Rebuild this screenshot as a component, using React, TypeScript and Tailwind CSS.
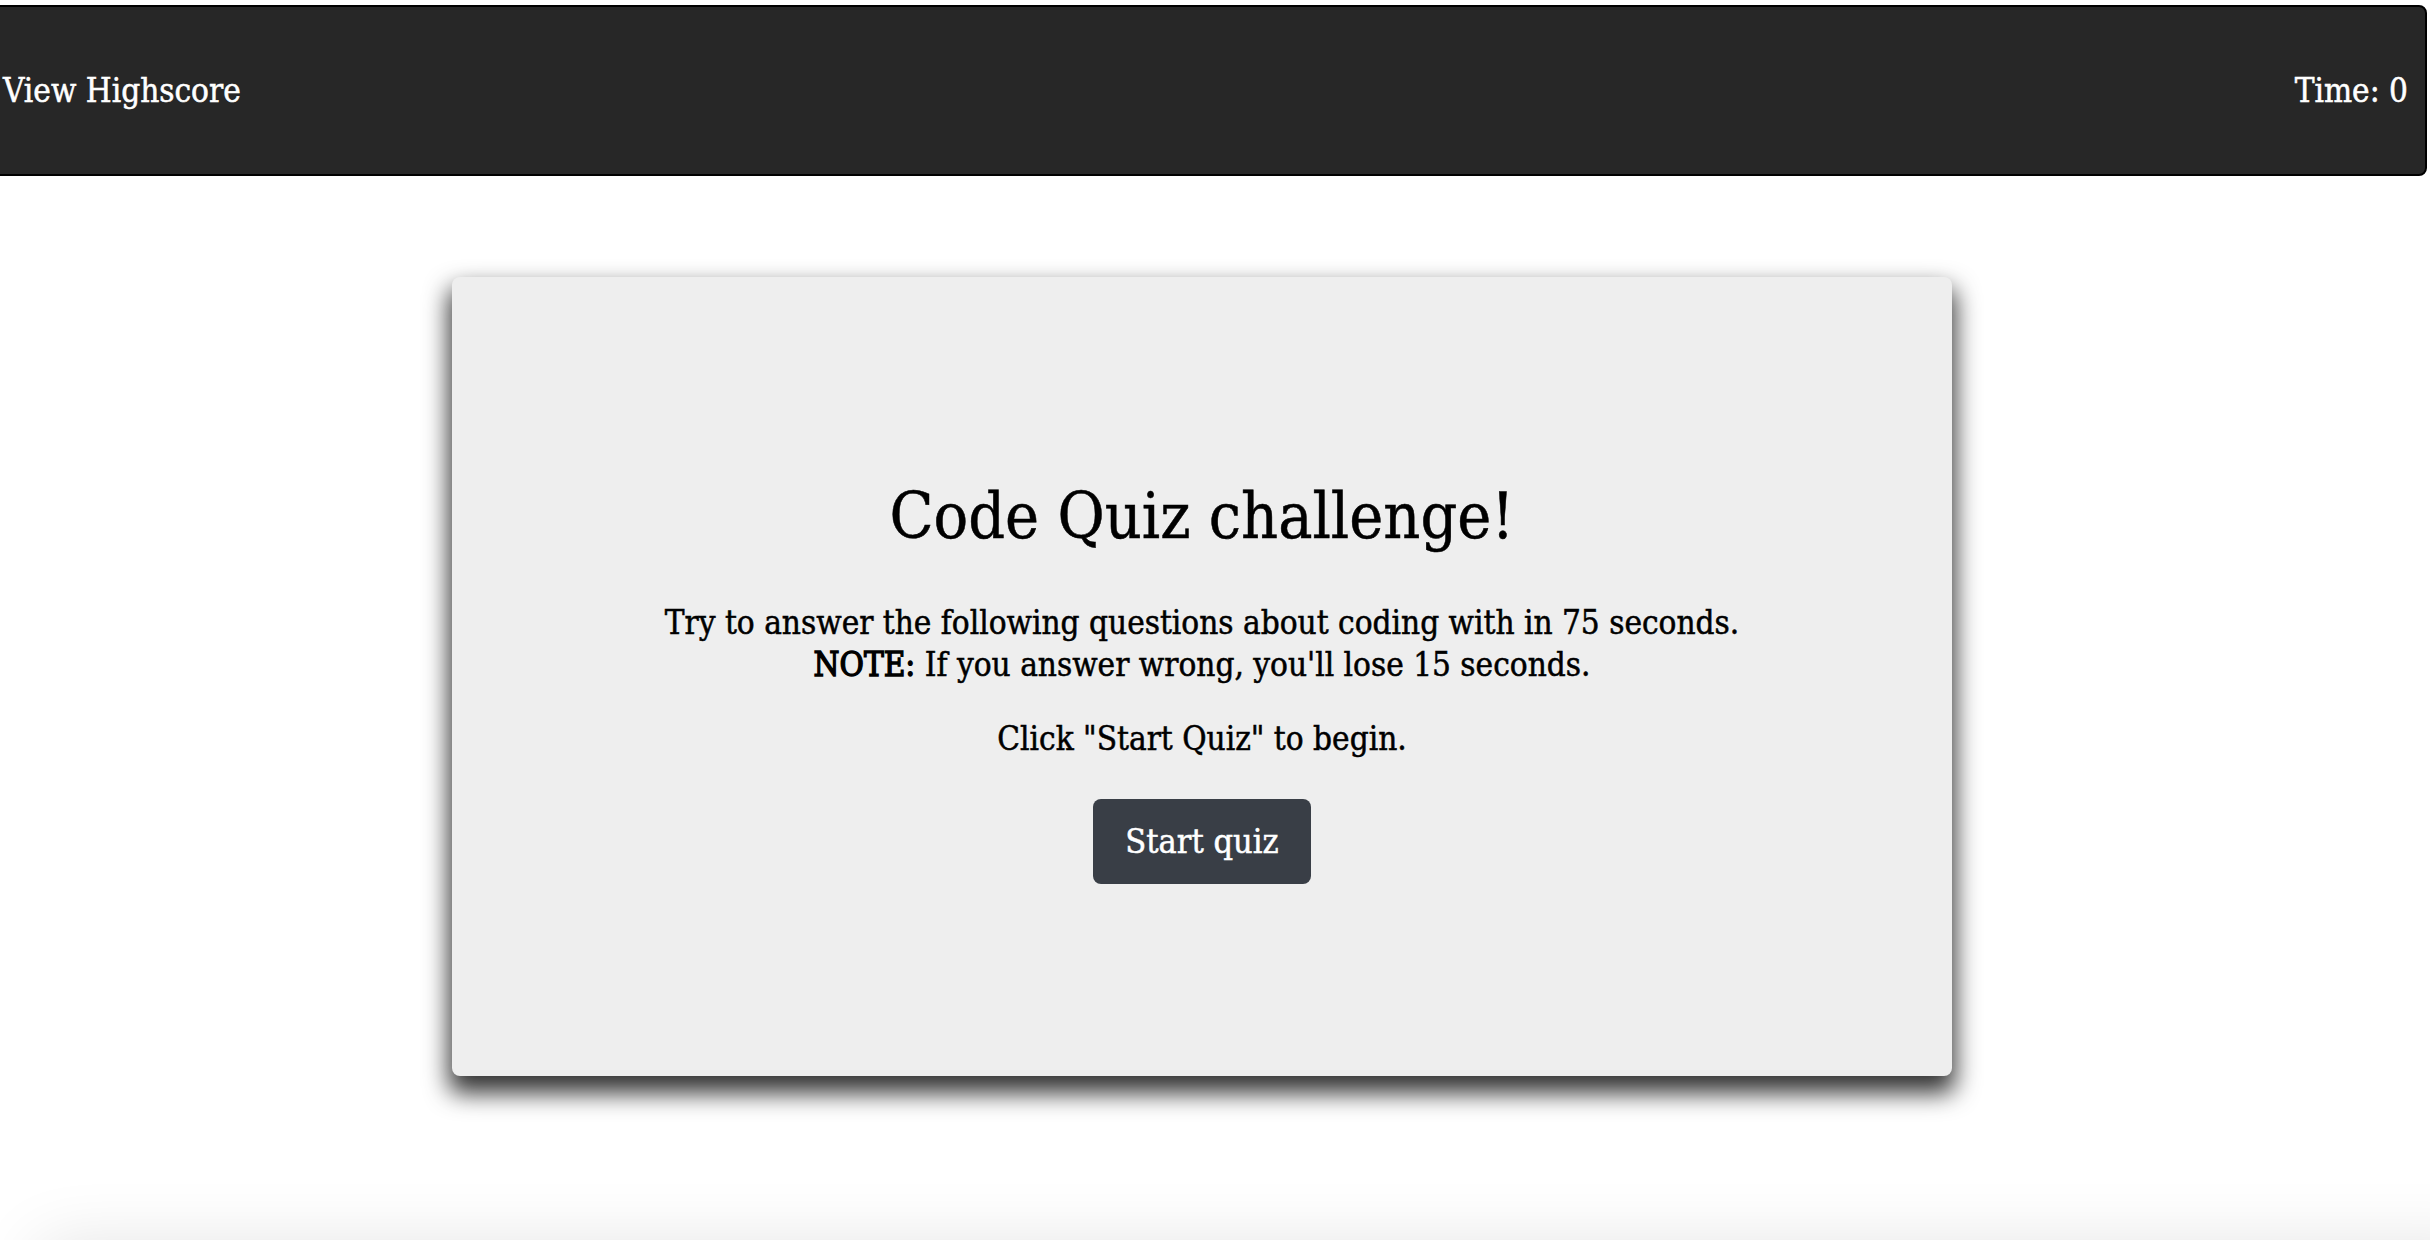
import React from "react";

const slab = "font-['DejaVu_Serif','Liberation_Serif',serif] font-stretch-condensed [-webkit-text-stroke:0.5px_currentColor]";

export default function App() {
  return (
    <div className={`min-h-screen bg-white overflow-hidden ${slab}`}>
      {/* Top bar */}
      <header className="mt-[5px] ml-[-12px] mr-[3px] flex h-[171px] items-center justify-between rounded-lg border-2 border-black bg-[#272727] pl-[13px] pr-[17px] text-[33px] text-white">
        <span>View Highscore</span>
        <span>Time: 0</span>
      </header>

      {/* Quiz card */}
      <main className="ml-[452px] mt-[101px] w-[1500px]">
        <div className="flex h-[799px] flex-col items-center rounded-lg bg-[#eeeeee] pt-[205px] text-black shadow-[0_14px_24px_3px_rgba(0,0,0,0.8)]">
          <h1 className="text-[64px] leading-[68px]">Code Quiz challenge!</h1>
          <p className="mt-[52px] text-center text-[33px] leading-[42px]">
            Try to answer the following questions about coding with in 75 seconds.
            <br />
            <b className="font-normal [-webkit-text-stroke:1.3px_currentColor]">NOTE:</b> If you answer wrong, you'll lose 15 seconds.
          </p>
          <p className="mt-[32px] text-[33px] leading-[42px]">Click "Start Quiz" to begin.</p>
          <button className="mt-[39px] h-[85px] w-[218px] rounded-lg bg-[#393e46] text-[34px] text-white">
            Start quiz
          </button>
        </div>
      </main>

      {/* next section peeking in below the fold */}
      <div className="ml-[40px] mr-[-60px] mt-[170px] h-[200px] bg-white shadow-[0_0_70px_rgba(0,0,0,0.12)]" />
    </div>
  );
}
